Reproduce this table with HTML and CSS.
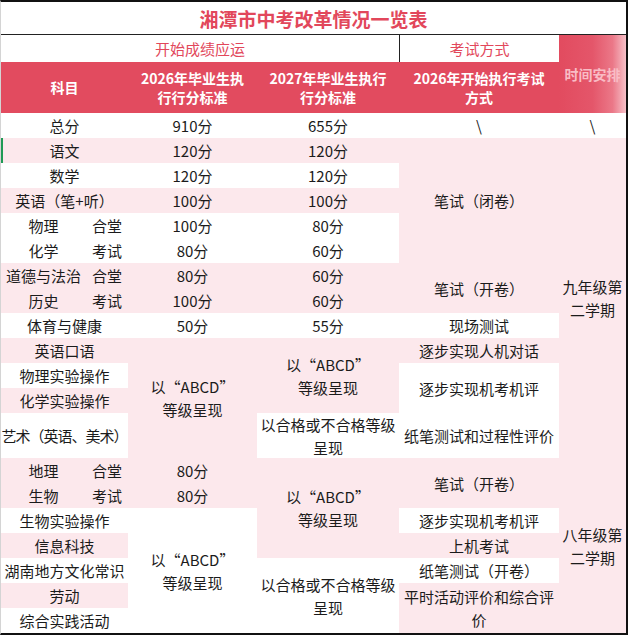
FILE: index.html
```html
<!DOCTYPE html>
<html lang="zh-CN">
<head>
<meta charset="utf-8">
<title>湘潭市中考改革情况一览表</title>
<link rel="stylesheet" href="styles.css">
</head>
<body>
<div class="sheet">
  <div class="title c6">湘潭市中考改革情况一览表</div>

  <div class="group c4">开始成绩应运</div>
  <div class="group boxed">考试方式</div>
  <div class="sched r2">时间安排</div>

  <div class="head c2">科目</div>
  <div class="head">2026年毕业生执<br>行行分标准</div>
  <div class="head">2027年毕业生执行<br>行分标准</div>
  <div class="head">2026年开始执行考试<br>方式</div>

  <div class="cell c2">总分</div>
  <div class="cell">910分</div>
  <div class="cell">655分</div>
  <div class="cell">\</div>
  <div class="cell">\</div>

  <div class="cell c2 pk mark">语文</div>
  <div class="cell pk">120分</div>
  <div class="cell pk">120分</div>
  <div class="cell pk r5">笔试（闭卷）</div>
  <div class="cell pk r12">九年级第<br>二学期</div>

  <div class="cell c2">数学</div>
  <div class="cell">120分</div>
  <div class="cell">120分</div>

  <div class="cell c2 pk">英语（笔+听）</div>
  <div class="cell pk">100分</div>
  <div class="cell pk">100分</div>

  <div class="cell">物理</div>
  <div class="cell">合堂</div>
  <div class="cell">100分</div>
  <div class="cell">80分</div>

  <div class="cell">化学</div>
  <div class="cell">考试</div>
  <div class="cell">80分</div>
  <div class="cell">60分</div>

  <div class="cell pk">道德与法治</div>
  <div class="cell pk">合堂</div>
  <div class="cell pk">80分</div>
  <div class="cell pk">60分</div>
  <div class="cell pk r2">笔试（开卷）</div>

  <div class="cell pk">历史</div>
  <div class="cell pk">考试</div>
  <div class="cell pk">100分</div>
  <div class="cell pk">60分</div>

  <div class="cell c2">体育与健康</div>
  <div class="cell">50分</div>
  <div class="cell">55分</div>
  <div class="cell">现场测试</div>

  <div class="cell c2 pk">英语口语</div>
  <div class="cell pk r4">以“ABCD”<br>等级呈现</div>
  <div class="cell pk r3">以“ABCD”<br>等级呈现</div>
  <div class="cell pk">逐步实现人机对话</div>

  <div class="cell c2">物理实验操作</div>
  <div class="cell r2">逐步实现机考机评</div>

  <div class="cell c2 pk">化学实验操作</div>

  <div class="cell c2 tight">艺术（英语、美术）</div>
  <div class="cell">以合格或不合格等级<br>呈现</div>
  <div class="cell">纸笔测试和过程性评价</div>

  <div class="cell pk">地理</div>
  <div class="cell pk">合堂</div>
  <div class="cell pk">80分</div>
  <div class="cell pk r4">以“ABCD”<br>等级呈现</div>
  <div class="cell pk r2">笔试（开卷）</div>
  <div class="cell pk r7">八年级第<br>二学期</div>

  <div class="cell pk">生物</div>
  <div class="cell pk">考试</div>
  <div class="cell pk">80分</div>

  <div class="cell c2">生物实验操作</div>
  <div class="cell r5">以“ABCD”<br>等级呈现</div>
  <div class="cell">逐步实现机考机评</div>

  <div class="cell c2 pk">信息科技</div>
  <div class="cell pk">上机考试</div>

  <div class="cell c2">湖南地方文化常识</div>
  <div class="cell r3">以合格或不合格等级<br>呈现</div>
  <div class="cell">纸笔测试（开卷）</div>

  <div class="cell c2 pk">劳动</div>
  <div class="cell pk r2">平时活动评价和综合评<br>价</div>

  <div class="cell c2">综合实践活动</div>
</div>
</body>
</html>
```

FILE: styles.css
```css
html, body {
  margin: 0;
  padding: 0;
  background: #ffffff;
}

.sheet {
  box-sizing: border-box;
  width: 628px;
  height: 635px;
  border-top: 2px solid #111;
  border-right: 2px solid #111;
  border-bottom: 2px solid #111;
  border-left: 1px solid #d4d4d4;
  display: grid;
  grid-template-columns: 85px 42px 129px 142px 160px 1fr;
  grid-template-rows: 33px 27px 51px repeat(12, 25px) 45px repeat(7, 25px);
  font-family: "Noto Sans CJK SC", "Microsoft YaHei", sans-serif;
  color: #1b1b1b;
}

.sheet > div {
  display: flex;
  align-items: center;
  justify-content: center;
  text-align: center;
  min-width: 0;
  white-space: nowrap;
}

.c2 { grid-column: span 2; }
.c4 { grid-column: span 4; }
.c6 { grid-column: span 6; }
.r2 { grid-row: span 2; }
.r3 { grid-row: span 3; }
.r4 { grid-row: span 4; }
.r5 { grid-row: span 5; }
.r7 { grid-row: span 7; }
.r12 { grid-row: span 12; }

.title {
  box-sizing: border-box;
  border-bottom: 1px solid #222;
  color: #e2475b;
  font-weight: 700;
  font-size: 19px;
  padding-top: 1px;
}

.group {
  color: #e2475b;
  font-size: 15px;
  background: #ffffff;
}

.boxed {
  box-sizing: border-box;
  border-left: 1px solid #222;
}

.sched {
  background: linear-gradient(to right, #e24b5f 0%, #e4566a 50%, #eb7888 80%, #f6c0c8 100%);
  color: #f9bcc5;
  font-weight: 700;
  font-size: 14px;
}

.head {
  background: #e24b5f;
  color: #ffffff;
  font-weight: 700;
  font-size: 14px;
  line-height: 19px;
}

.cell {
  font-size: 15px;
  line-height: 23px;
  background: #ffffff;
}

.tight {
  letter-spacing: -1px;
}

.pk {
  background: #fce8ec;
}

.mark {
  box-shadow: inset 2px 0 0 #1f9a55;
}
```
